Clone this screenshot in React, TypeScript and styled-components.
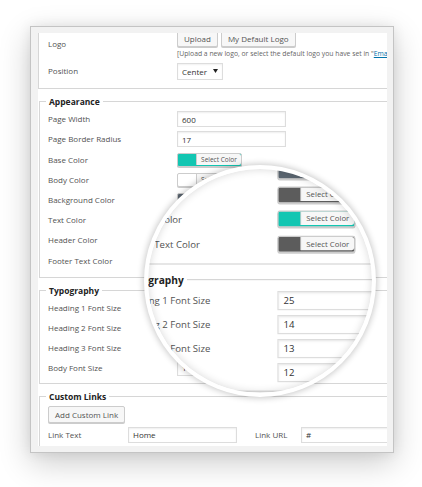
import React from "react";
import styled, { createGlobalStyle } from "styled-components";

const Global = createGlobalStyle`
  html, body { margin: 0; padding: 0; background: #fff; }
  body { font-family: "Open Sans", "Liberation Sans", sans-serif; }
  * { box-sizing: border-box; }
`;

const Stage = styled.div`
  position: relative;
  width: 422px;
  height: 487px;
  overflow: hidden;
  background: #fff;
`;

const Sheet = styled.div`
  width: 422px;
  height: 487px;
  padding: 26px 0 0 30px;
  background: #fff;
`;

const Frame = styled.div`
  width: 364px;
  height: 427px;
  border: 1px solid #c4c4c4;
  background: #f2f2f2;
  padding: 6px 6px 6px 7px;
  box-shadow: 0 10px 30px rgba(0, 0, 0, 0.2), 0 0 12px rgba(0, 0, 0, 0.08);
`;

const Viewport = styled.div`
  width: 349px;
  height: 413px;
  overflow: hidden;
  background: #fff;
`;

const Content = styled.div`
  width: 470px;
  margin-top: -3px;
  font-size: 8px;
  color: #555;
`;

const TopPanel = styled.div`
  display: grid;
  grid-template-columns: 129px 1fr;
  row-gap: 4px;
  align-items: center;
  justify-items: start;
  border-left: 1px solid #d6d6d6;
  border-bottom: 1px solid #d6d6d6;
  padding: 0 0 8px 9px;
`;

const Label = styled.span`
  font-size: 8px;
  line-height: 12px;
  color: #525252;
  white-space: nowrap;
`;

const ButtonRow = styled.div`
  display: flex;
  gap: 3px;
`;

const Button = styled.button`
  height: 17px;
  padding: 0 6px;
  border: 1px solid #cccccc;
  border-radius: 2px;
  background: #f7f7f7;
  box-shadow: 0 1px 0 #cccccc;
  font-family: "Open Sans", "Liberation Sans", sans-serif;
  font-size: 8px;
  color: #555;
  white-space: nowrap;
`;

const Help = styled.div`
  margin-top: 1.5px;
  font-size: 6.8px;
  line-height: 10px;
  color: #666;
  white-space: nowrap;
`;

const HelpLink = styled.span`
  color: #0073aa;
  text-decoration: underline;
`;

const SelectBox = styled.div`
  display: flex;
  align-items: center;
  justify-content: space-between;
  width: 46px;
  height: 17px;
  padding: 0 4px 0 4px;
  border: 1px solid #dddddd;
  background: #fff;
  box-shadow: inset 0 1px 2px rgba(0, 0, 0, 0.06);
  font-size: 8px;
  color: #333;
`;

const Fieldset = styled.fieldset<{ $pt?: number; $pb?: number }>`
  margin: 7px 0 0 1px;
  padding: ${(p) => p.$pt ?? 1}px 0 ${(p) => p.$pb ?? 6}px 8px;
  border: 1px solid #d6d6d6;
  min-width: 0;
`;

const Legend = styled.legend`
  margin-left: -2px;
  padding: 0 3px;
  font-size: 8.5px;
  line-height: 12px;
  font-weight: 700;
  color: #222;
`;

const FieldRow = styled.div<{ $h: number }>`
  display: grid;
  grid-template-columns: 129px 1fr;
  align-items: center;
  justify-items: start;
  height: ${(p) => p.$h}px;
`;

const TextInput = styled.div<{ $w?: number }>`
  display: flex;
  align-items: center;
  width: ${(p) => p.$w ?? 109}px;
  height: 16px;
  padding: 0 4px;
  border: 1px solid #dddddd;
  background: #fff;
  box-shadow: inset 0 1px 2px rgba(0, 0, 0, 0.07);
  font-size: 8px;
  color: #333;
  white-space: nowrap;
`;

const ColorButton = styled.div<{ $c: string }>`
  display: flex;
  align-items: flex-start;
  width: 65px;
  height: 14px;
  padding-left: 18px;
  border: 1px solid #cccccc;
  border-radius: 2px;
  background: ${(p) => p.$c};
  box-shadow: 0 1px 0 #cccccc;
`;

const ColorLabel = styled.span`
  flex: 1;
  height: 11px;
  border-left: 1px solid #cccccc;
  border-radius: 0 2px 2px 0;
  background: #f7f7f7;
  font-size: 6.5px;
  line-height: 11px;
  text-align: center;
  color: #555;
  white-space: nowrap;
`;

const AddButton = styled(Button)`
  display: block;
`;

const LinkRows = styled.div`
  margin-top: 2px;
`;

const LinkRow = styled.div`
  display: flex;
  align-items: center;
  height: 20px;
`;

const LinkLabel = styled(Label)<{ $w: number; $ml?: number }>`
  width: ${(p) => p.$w}px;
  margin-left: ${(p) => p.$ml ?? 0}px;
`;

const Lens = styled.div`
  position: absolute;
  left: 144px;
  top: 165px;
  width: 232px;
  height: 232px;
  border-radius: 50%;
  border: 4px solid #fff;
  overflow: hidden;
  background: #fff;
  box-shadow: 0 0 6px 1px rgba(0, 0, 0, 0.22);
  &::after {
    content: "";
    position: absolute;
    inset: 0;
    border-radius: 50%;
    box-shadow: inset 0 0 9px rgba(0, 0, 0, 0.16);
    pointer-events: none;
  }
`;

const Zoomed = styled.div`
  position: absolute;
  left: -83px;
  top: -238px;
  transform: scale(1.2);
  transform-origin: 0 0;
`;

const Caret = () => (
  <svg width="5" height="4" viewBox="0 0 5 4">
    <polygon points="0,0 5,0 2.5,4" fill="#222" />
  </svg>
);

const sizes = [
  { label: "Page Width", value: "600" },
  { label: "Page Border Radius", value: "17" },
];

const colors = [
  { label: "Base Color", color: "#12c6b2" },
  { label: "Body Color", color: "#ffffff" },
  { label: "Background Color", color: "#5b6671" },
  { label: "Text Color", color: "#5c5c5c" },
  { label: "Header Color", color: "#12c6b2" },
  { label: "Footer Text Color", color: "#5c5c5c" },
];

const typography = [
  { label: "Heading 1 Font Size", value: "25" },
  { label: "Heading 2 Font Size", value: "14" },
  { label: "Heading 3 Font Size", value: "13" },
  { label: "Body Font Size", value: "12" },
];

const links = [
  { text: "Home", url: "#" },
  { text: "About", url: "#" },
];

function Page() {
  return (
    <Sheet>
      <Frame>
        <Viewport>
          <Content>
            <TopPanel>
              <Label>Logo</Label>
              <div>
                <ButtonRow>
                  <Button>Upload</Button>
                  <Button>My Default Logo</Button>
                </ButtonRow>
                <Help>
                  [Upload a new logo, or select the default logo you have set in "
                  <HelpLink>Email Settings</HelpLink>"]
                </Help>
              </div>
              <Label>Position</Label>
              <SelectBox>
                Center
                <Caret />
              </SelectBox>
            </TopPanel>

            <Fieldset $pt={1.6} $pb={6}>
              <Legend>Appearance</Legend>
              {sizes.map((s) => (
                <FieldRow $h={20.2} key={s.label}>
                  <Label>{s.label}</Label>
                  <TextInput>{s.value}</TextInput>
                </FieldRow>
              ))}
              {colors.map((c) => (
                <FieldRow $h={20.2} key={c.label}>
                  <Label>{c.label}</Label>
                  <ColorButton $c={c.color}>
                    <ColorLabel>Select Color</ColorLabel>
                  </ColorButton>
                </FieldRow>
              ))}
            </Fieldset>

            <Fieldset $pt={1} $pb={5}>
              <Legend>Typography</Legend>
              {typography.map((t) => (
                <FieldRow $h={20} key={t.label}>
                  <Label>{t.label}</Label>
                  <TextInput>{t.value}</TextInput>
                </FieldRow>
              ))}
            </Fieldset>

            <Fieldset $pt={3} $pb={6}>
              <Legend>Custom Links</Legend>
              <AddButton>Add Custom Link</AddButton>
              <LinkRows>
                {links.map((l) => (
                  <LinkRow key={l.text}>
                    <LinkLabel $w={80}>Link Text</LinkLabel>
                    <TextInput>{l.text}</TextInput>
                    <LinkLabel $w={46} $ml={18}>
                      Link URL
                    </LinkLabel>
                    <TextInput $w={120}>{l.url}</TextInput>
                  </LinkRow>
                ))}
              </LinkRows>
            </Fieldset>
          </Content>
        </Viewport>
      </Frame>
    </Sheet>
  );
}

export default function App() {
  return (
    <>
      <Global />
      <Stage>
        <Page />
        <Lens>
          <Zoomed>
            <Page />
          </Zoomed>
        </Lens>
      </Stage>
    </>
  );
}
